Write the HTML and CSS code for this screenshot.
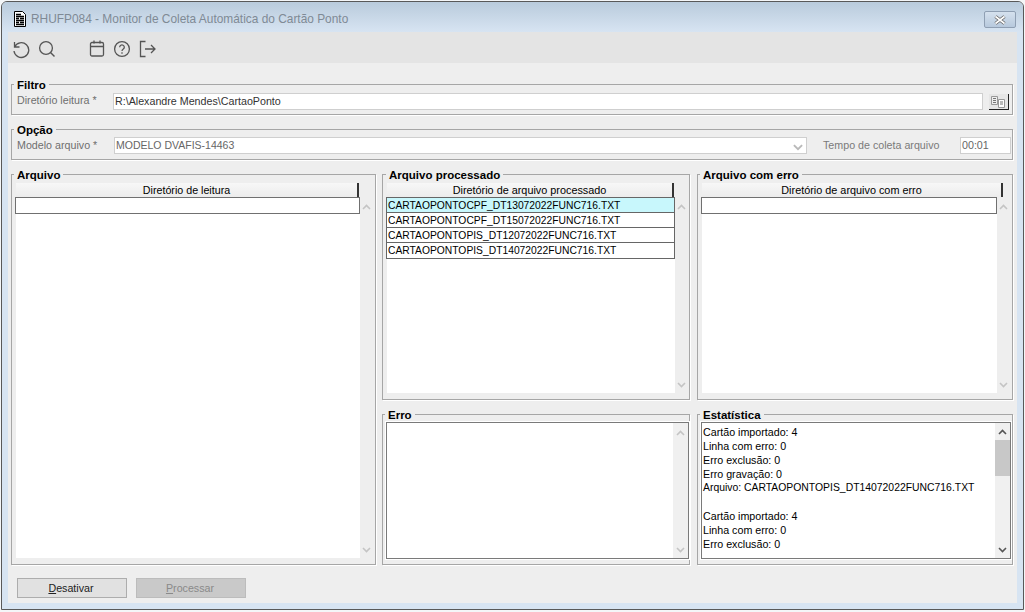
FILE: index.html
```html
<!DOCTYPE html>
<html lang="pt">
<head>
<meta charset="utf-8">
<title>RHUFP084</title>
<link rel="stylesheet" href="styles.css">
</head>
<body>
<svg class="defs" width="0" height="0" aria-hidden="true">
  <symbol id="up" viewBox="0 0 9 6"><path d="M1 5l3.5-3.5L8 5" fill="none" stroke="currentColor" stroke-width="1.6"/></symbol>
  <symbol id="down" viewBox="0 0 9 6"><path d="M1 1l3.5 3.5L8 1" fill="none" stroke="currentColor" stroke-width="1.6"/></symbol>
</svg>
<div class="window">
  <header class="titlebar">
    <svg class="title-icon" width="14" height="16" viewBox="0 0 14 16"><path d="M1.5.5h8l3 3v12h-11z" fill="#fff" stroke="#000"/><path d="M3 3.5h5M3 5.5h8M3 7.5h3M7 7.5h4M3 9.5h8M3 11.5h3M7 11.5h4M3 13.5h8" stroke="#000" stroke-width="1.4"/></svg>
    <span class="title-text">RHUFP084 - Monitor de Coleta Automática do Cartão Ponto</span>
    <button class="close" aria-label="Fechar">
      <svg width="14" height="10" viewBox="0 0 14 10"><path d="M2.5 1.5l9 7M11.5 1.5l-9 7" stroke="#666" stroke-width="3.4"/><path d="M2.5 1.5l9 7M11.5 1.5l-9 7" stroke="#fff" stroke-width="1.6"/></svg>
    </button>
  </header>
  <div class="client">
    <nav class="toolbar">
      <svg class="tool" width="20" height="20" viewBox="0 0 20 20"><path d="M3.5 3v5h5M3.6 8A7.4 7.4 0 1 1 3 12" fill="none" stroke="#555" stroke-width="1.3"/></svg>
      <svg class="tool" width="20" height="20" viewBox="0 0 20 20"><circle cx="10" cy="9" r="6.4" fill="none" stroke="#555" stroke-width="1.3"/><path d="M14.5 13.5l4 4" stroke="#555" stroke-width="1.5"/></svg>
      <svg class="tool tool-gap" width="20" height="20" viewBox="0 0 20 20"><rect x="3.5" y="3.5" width="13" height="13.5" rx="1.5" fill="none" stroke="#555" stroke-width="1.3"/><path d="M3.5 7.5h13M7 1.5v3M13 1.5v3" fill="none" stroke="#555" stroke-width="1.3"/></svg>
      <svg class="tool" width="20" height="20" viewBox="0 0 20 20"><circle cx="10" cy="10" r="7.4" fill="none" stroke="#555" stroke-width="1.3"/><path d="M7.7 8.2a2.3 2.2 0 1 1 3.6 1.8c-.9.6-1.3 1-1.3 2" fill="none" stroke="#555" stroke-width="1.3"/><path d="M10 13.2v1.6" stroke="#555" stroke-width="1.3"/></svg>
      <svg class="tool" width="20" height="20" viewBox="0 0 20 20"><path d="M8.5 2.5h-5v15h5M8 10h10M14 6l4 4-4 4" fill="none" stroke="#555" stroke-width="1.3"/></svg>
    </nav>
    <main class="content">
      <fieldset class="group">
        <legend>Filtro</legend>
        <label class="label">Diretório leitura *</label>
        <div class="input input-path">R:\Alexandre Mendes\CartaoPonto</div>
        <button class="browse" aria-label="Procurar">
          <svg width="17" height="12" viewBox="0 0 17 12"><path d="M1.5.5h6v8h-6z" fill="#eee" stroke="#999"/><path d="M3 2.5h3M3 4.5h3M3 6.5h3" stroke="#777"/><path d="M8.5 3.5h6v8h-6z" fill="#fff" stroke="#999"/><path d="M10 6h3M10 8h3" stroke="#777"/></svg>
        </button>
      </fieldset>
      <fieldset class="group">
        <legend>Opção</legend>
        <label class="label">Modelo arquivo *</label>
        <div class="input input-select">MODELO DVAFIS-14463
          <svg class="select-arrow" width="12" height="7"><use href="#down"/></svg>
        </div>
        <label class="label label-time">Tempo de coleta arquivo</label>
        <div class="input input-time">00:01</div>
      </fieldset>

      <div class="panels">
        <fieldset class="panel panel-file">
          <legend>Arquivo</legend>
          <div class="head head-file">Diretório de leitura</div>
          <div class="body">
            <div class="rows"><div class="row row-empty"></div></div>
            <div class="scroll"><svg width="9" height="6"><use href="#up"/></svg><svg width="9" height="6"><use href="#down"/></svg></div>
          </div>
        </fieldset>
        <fieldset class="panel panel-mid">
          <legend>Arquivo processado</legend>
          <div class="head head-done">Diretório de arquivo processado</div>
          <div class="body">
            <div class="rows">
              <div class="row row-active">CARTAOPONTOCPF_DT13072022FUNC716.TXT</div>
              <div class="row">CARTAOPONTOCPF_DT15072022FUNC716.TXT</div>
              <div class="row">CARTAOPONTOPIS_DT12072022FUNC716.TXT</div>
              <div class="row">CARTAOPONTOPIS_DT14072022FUNC716.TXT</div>
            </div>
            <div class="scroll"><svg width="9" height="6"><use href="#up"/></svg><svg width="9" height="6"><use href="#down"/></svg></div>
          </div>
        </fieldset>
        <fieldset class="panel panel-right">
          <legend>Arquivo com erro</legend>
          <div class="head head-err">Diretório de arquivo com erro</div>
          <div class="body">
            <div class="rows"><div class="row row-empty"></div></div>
            <div class="scroll"><svg width="9" height="6"><use href="#up"/></svg><svg width="9" height="6"><use href="#down"/></svg></div>
          </div>
        </fieldset>
        <fieldset class="panel panel-memo panel-memo-mid">
          <legend>Erro</legend>
          <div class="memo">
            <div class="memo-text"></div>
            <div class="scroll scroll-memo"><svg width="9" height="6"><use href="#up"/></svg><svg width="9" height="6"><use href="#down"/></svg></div>
          </div>
        </fieldset>
        <fieldset class="panel panel-memo panel-right">
          <legend>Estatística</legend>
          <div class="memo">
            <div class="memo-text">
              <div class="memo-line">Cartão importado: 4</div>
              <div class="memo-line">Linha com erro: 0</div>
              <div class="memo-line">Erro exclusão: 0</div>
              <div class="memo-line">Erro gravação: 0</div>
              <div class="memo-line memo-caps">Arquivo: CARTAOPONTOPIS_DT14072022FUNC716.TXT</div>
              <div class="memo-line memo-blank"></div>
              <div class="memo-line">Cartão importado: 4</div>
              <div class="memo-line">Linha com erro: 0</div>
              <div class="memo-line">Erro exclusão: 0</div>
            </div>
            <div class="scroll scroll-memo scroll-live">
              <svg width="9" height="6"><use href="#up"/></svg>
              <div class="thumb"></div>
              <svg class="scroll-end" width="9" height="6"><use href="#down"/></svg>
            </div>
          </div>
        </fieldset>
      </div>

      <footer class="actions">
        <button class="btn"><u>D</u>esativar</button>
        <button class="btn btn-off"><u>P</u>rocessar</button>
      </footer>
    </main>
  </div>
</div>
</body>
</html>
```
FILE: styles.css
```css
* { box-sizing: border-box; }
html, body { margin: 0; height: 100%; }
body {
  background: #f4f6f8;
  font: 10.7px/14px "Liberation Sans", Arial, sans-serif;
  color: #000;
  padding: 1px;
  overflow: hidden;
}
.defs { position: absolute; }
.window {
  width: 1023px;
  height: 609px;
  border: 1px solid #595959;
  border-radius: 6px 6px 0 0;
  background: #d7e4f2;
  padding: 0 6px 6px;
  display: flex;
  flex-direction: column;
}
.titlebar {
  flex: 0 0 30px;
  margin: 0 -6px;
  padding: 0 7px 0 11px;
  display: flex;
  align-items: center;
  border-radius: 5px 5px 0 0;
  background: linear-gradient(#b9cbdc, #d7e4f2);
}
.title-icon { margin-top: 4px; }
.title-text {
  margin: 3px 0 0 4px;
  font-size: 11.9px;
  color: #7f8a95;
  flex: 1;
}
.close {
  width: 32px;
  height: 17px;
  margin-top: 5px;
  padding: 0;
  border: 1px solid #8f9fb3;
  border-radius: 2px;
  background: linear-gradient(#d5e1ee, #b7c9dd);
  display: flex;
  align-items: center;
  justify-content: center;
}
.client {
  flex: 1;
  display: flex;
  flex-direction: column;
  background: #eeeeee;
  min-height: 0;
}
.toolbar {
  flex: 0 0 31px;
  background: #e4e4e4;
  display: flex;
  align-items: center;
  padding: 3px 0 0 3px;
  gap: 5px;
}
.tool-gap { margin-left: 26px; }
.content {
  flex: 1;
  display: flex;
  flex-direction: column;
  padding: 15px 4px 5px 3px;
  min-height: 0;
}
fieldset { margin: 0; min-width: 0; }
legend {
  padding: 0 3px;
  margin-left: -2px;
  height: 12px;
  line-height: 14px;
  font-weight: bold;
  font-size: 11.5px;
}
.group legend { margin-left: -3px; }
.panel-mid legend, .panel-memo legend { margin-left: -1px; }
.group {
  height: 37px;
  margin-bottom: 8px;
  padding: 2px 3px 0 5px;
  border: 1px solid #a6a6a6;
  box-shadow: 1px 1px 0 #fff;
  display: flex;
  align-items: flex-start;
}
.label {
  flex: 0 0 96px;
  line-height: 16px;
  color: #6e6e6e;
}
.input {
  height: 17px;
  background: #fff;
  border: 1px solid #cfcfcf;
  padding: 0 1px;
  line-height: 15px;
  color: #444;
}
.input-path { flex: 0 0 870px; color: #333; margin-top: 1px; }
.browse {
  width: 21px;
  height: 16px;
  margin: 2px 0 0 6px;
  padding: 0;
  border: 0;
  border-right: 1px solid #222;
  border-bottom: 1px solid #222;
  background: #e6e6e6;
  display: flex;
  align-items: center;
  justify-content: center;
}
.input-select {
  flex: 0 0 693px;
  margin: 0 0 0 1px;
  position: relative;
  color: #666;
  font-size: 10.5px;
}
.select-arrow {
  position: absolute;
  right: 2px;
  top: 6px;
  color: #b9b9b9;
}
.label-time { flex: 0 0 137px; margin-left: 16px; color: #7a7a7a; }
.input-time { flex: 0 0 51px; color: #666; }
.panels {
  flex: none;
  height: 397px;
  display: grid;
  grid-template-columns: 365px 308px 316px;
  grid-template-rows: 232px 157px;
  column-gap: 6px;
  row-gap: 8px;
}
.panel {
  padding: 3px 3px 6px 4px;
  border: 1px solid #a6a6a6;
  box-shadow: 1px 1px 0 #fff;
  display: flex;
  flex-direction: column;
  min-height: 0;
}
.panel-file { grid-row: 1 / 3; }
.panel-mid { padding-right: 2px; }
.panel-right { margin-left: 1px; margin-right: -1px; }
.head {
  height: 14px;
  line-height: 15px;
  text-align: center;
  flex: none;
  background: linear-gradient(#f7f7f7, #ececec);
  border-right: 2px solid #333;
}
.head-file { width: 343px; }
.head-done { width: 287px; font-size: 10.85px; }
.head-err { width: 301px; font-size: 10.85px; }
.body {
  flex: 1;
  display: flex;
  min-height: 0;
}
.rows {
  flex: 1;
  min-width: 0;
  background: #fff;
}
.row {
  height: 16px;
  margin: 0 0 -1px -1px;
  border: 1px solid #666;
  padding-left: 1px;
  line-height: 16px;
  font-size: 10.3px;
  background: #fff;
  white-space: nowrap;
}
.row:last-child { height: 17px; }
.row-empty { height: 17px; margin-bottom: 0; border-color: #707070; }
.row-active { background: #c8f7fc; }
.scroll {
  flex: 0 0 12px;
  display: flex;
  flex-direction: column;
  justify-content: space-between;
  align-items: center;
  padding: 7px 0 5px;
  background: #eeeeee;
  color: #c4c4c4;
}
.panel-memo { padding: 2px 1px 5px 3px; }
.panel-memo-mid { padding-right: 0; }
.memo {
  flex: 1;
  display: flex;
  min-height: 0;
  background: #fff;
  border: 1px solid #7a7a7a;
  box-shadow: 0 0 0 1px #fff;
}
.memo-text {
  flex: 1;
  min-width: 0;
  padding: 2px 0 0 1px;
  overflow: hidden;
}
.memo-line { height: 14px; white-space: nowrap; }
.memo-caps { font-size: 10.4px; }
.scroll-memo {
  flex: 0 0 15px;
  padding: 7px 0 5px;
  background: #f0f0f0;
}
.scroll-live {
  color: #555;
  justify-content: flex-start;
  padding-top: 6px;
}
.thumb {
  align-self: stretch;
  height: 36px;
  margin-top: 5px;
  background: #c8c8c8;
}
.scroll-end { margin-top: auto; }
.actions {
  flex: 1;
  display: flex;
  align-items: flex-start;
  gap: 9px;
  padding: 13px 0 0 6px;
}
.btn {
  width: 110px;
  height: 20px;
  padding: 0 2px 0 0;
  font: inherit;
  color: #222;
  border: 1px solid #adadad;
  background: #e1e1e1;
}
.btn-off {
  background: #c9c9c9;
  color: #8a8a8a;
  border-color: #bcbcbc;
}
```
